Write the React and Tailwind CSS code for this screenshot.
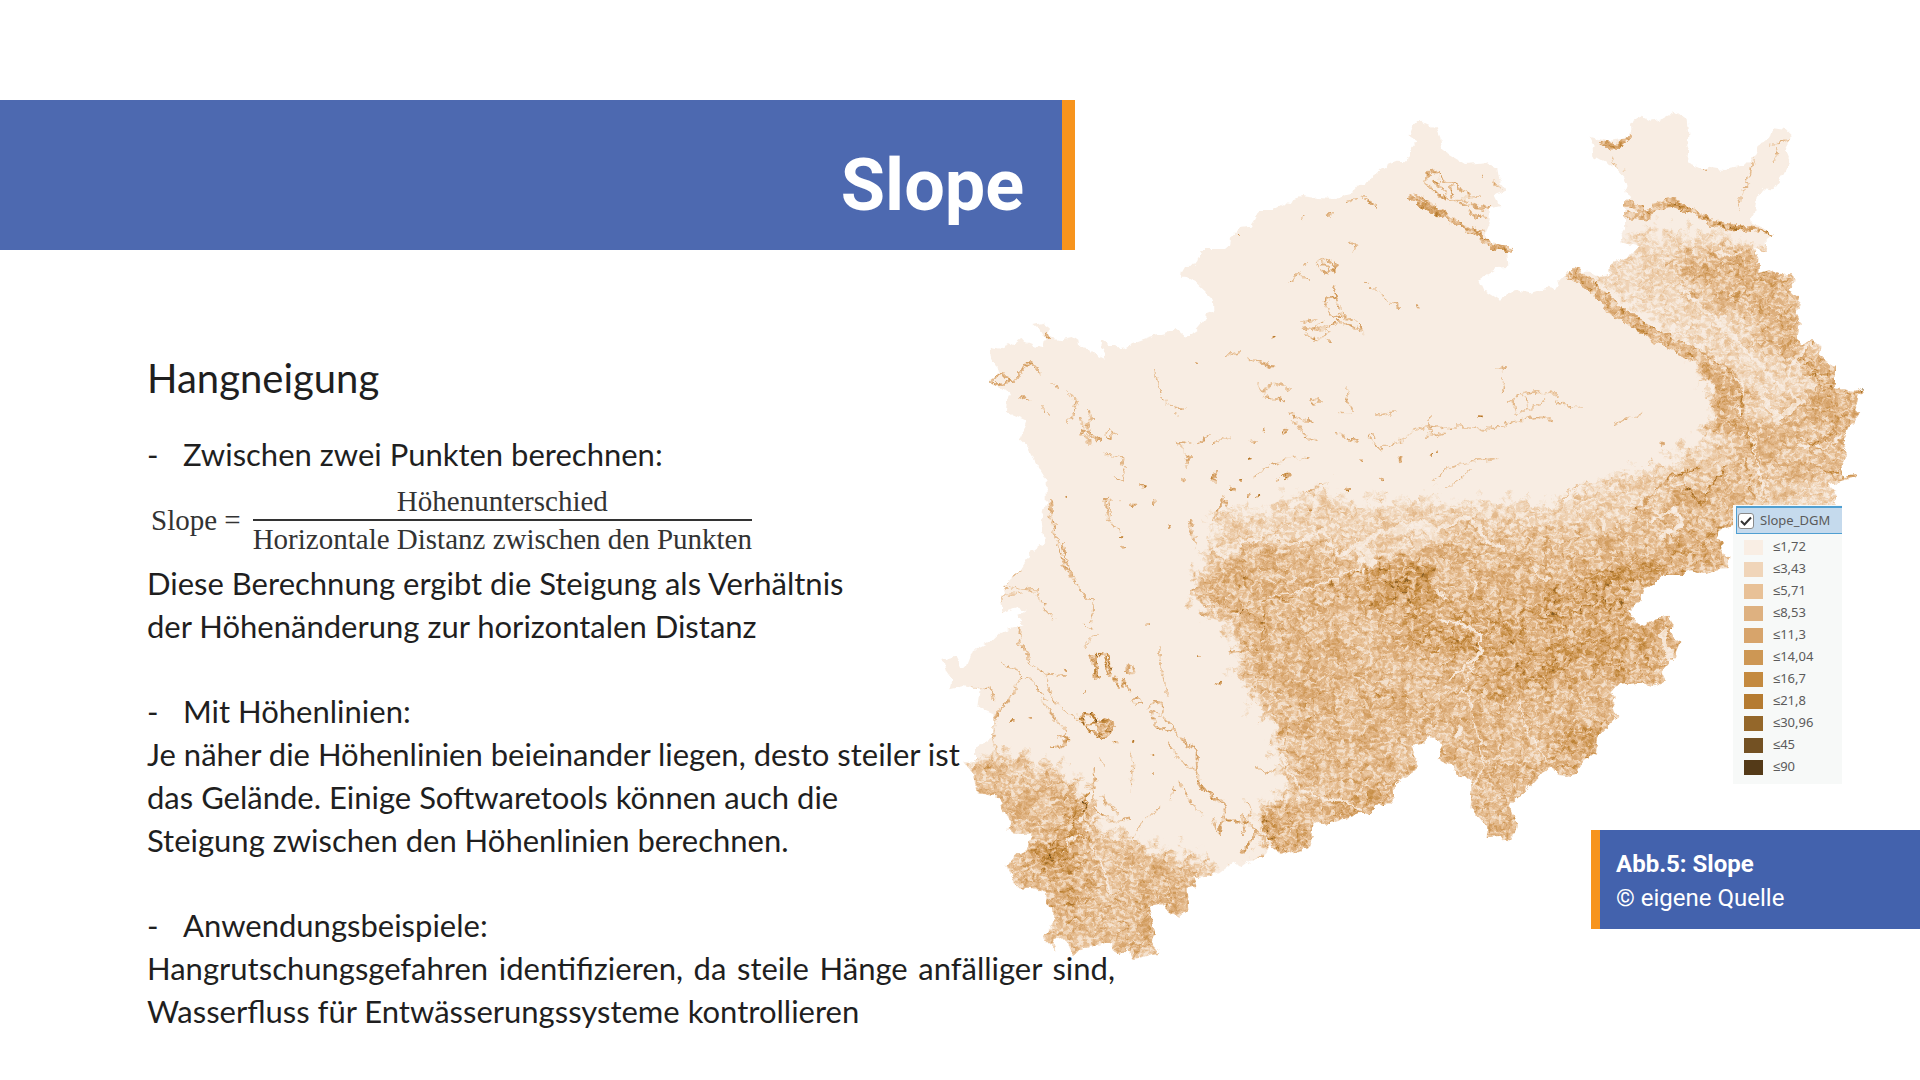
import React from "react";

const LEGEND = [
  ["≤1,72", "bg-[#f9eee4]"],
  ["≤3,43", "bg-[#f0d5b9]"],
  ["≤5,71", "bg-[#e8c197]"],
  ["≤8,53", "bg-[#deb180]"],
  ["≤11,3", "bg-[#d7a46b]"],
  ["≤14,04", "bg-[#cd9754]"],
  ["≤16,7", "bg-[#c48a3f]"],
  ["≤21,8", "bg-[#b57b31]"],
  ["≤30,96", "bg-[#94672a]"],
  ["≤45", "bg-[#735123]"],
  ["≤90", "bg-[#543a18]"],
];

const OUTLINE =
  "M178 853L178 840L205 822L200 800L182 765L180 748L188 742L210 747L235 738L250 730L271 713L285 728L310 738L342 745L347 722L328 690L310 675L340 668L360 683L352 702L370 715L395 718L425 711L442 722L445 742L482 745L492 762L520 776L525 755L513 738L518 724L535 735L556 735L568 748L595 742L605 730L660 710L705 700L735 686L765 712L800 690L825 660L828 640L853 630L852 600L830 578L800 550L772 533L753 533L755 515L765 498L790 497L805 480L815 447L885 447L900 435L905 408L927 384L962 380L975 360L990 330L1030 330L1060 313L1080 315L1095 295L1115 288L1160 294L1225 297L1250 280L1270 275L1290 252L1320 244L1335 222L1375 192L1400 182L1425 184L1440 172L1440 150L1462 124L1438 108L1450 75L1465 60" +
  "L1520 85L1530 110L1537 152L1605 192L1670 187L1702 207L1708 240L1732 272L1692 285L1708 318L1682 325L1682 360L1665 400L1680 428L1745 440L1750 452L1732 458L1735 500L1700 505L1645 538L1660 570L1710 602L1755 570L1800 580L1850 563L1875 567L1888 545L1910 520L1935 502L1955 515L1985 515L2015 530L2038 525L2038 495L2100 465L2122 442L2075 430L2072 405L2085 385L2085 300L2097 290L2080 230L2050 200L1990 168L1988 150L1995 140L1980 110L2015 120L2050 125L2075 120L2102 105L2100 70L2135 50L2165 65L2200 55L2235 35L2270 60L2275 105L2272 140L2278 155L2273 190L2315 207L2340 200L2380 207L2445 195L2480 160L2490 132L2520 120L2530 85L2570 90L2588 108L2565 150L2580 185L2560 225L2530 268L2500 265L2480 295L2472 335L2460 355L2462 370L2495 380L2532 405L2510 420L2512 455L2475 450L2488 475L2485 520L2520 510L2550 525L2585 522L2592 545L2575 570L2610 590L2600 640L2612 670L2600 715L2615 735L2640 722L2675 735L2670 770L2715 800L2715 865L2770 872L2800 865L2785 890L2775 930L2788 942L2755 985L2735 1030L2750 1055L2735 1095L2735 1130L2780 1120L2778 1132L2735 1142L2700 1155L2720 1185L2708 1240" +
  "L2410 1240L2410 1278L2365 1290L2362 1312L2378 1330L2375 1360L2398 1372L2392 1408L2360 1408L2330 1422L2290 1410L2250 1425L2200 1425L2170 1455L2145 1465L2125 1505L2098 1535L2130 1578L2160 1562L2215 1550L2228 1570L2225 1600L2248 1628L2235 1670L2195 1715L2207 1742L2160 1760L2130 1748L2060 1755L2042 1778L2060 1795L2045 1820L2065 1845L2035 1880L2005 1910L1998 1960L1955 1990L1930 2028L1885 2025L1865 2002L1840 2015L1795 2065L1740 2115L1762 2170L1750 2210L1730 2228L1710 2210L1670 2215L1672 2180L1622 2125L1625 2035L1585 2030L1565 1995L1520 1975L1540 1935L1498 1912L1475 1932L1448 1938L1462 1970L1460 2010L1395 2050L1395 2090L1380 2110L1335 2115L1320 2145L1295 2138L1200 2172L1150 2165L1148 2205L1135 2245L1060 2265L1020 2235L1000 2275L965 2280L935 2302L910 2285L865 2320L830 2330L790 2335L800 2360L770 2365L775 2430L745 2450L710 2430L700 2408L655 2420L665 2450L678 2495L665 2525L688 2558L610 2578L595 2545L570 2568L555 2560L545 2525L450 2548L430 2568L415 2530L380 2508L370 2530L378 2555L342 2515L370 2465L370 2430L345 2405L350 2380L310 2365L262 2362L240 2320L230 2295L270 2258L290 2250L305 2200L260 2202L232 2188L245 2170L225 2150L205 2090L140 2080L130 2025L100 1982L135 1990L135 1940L165 1928L190 1910L190 1840L145 1820L152 1770L100 1758L58 1768L65 1740L48 1715L40 1680L75 1670L90 1700L110 1700L130 1650L190 1620L215 1595L260 1582L285 1575L262 1548L290 1532L265 1523L215 1542L210 1485L228 1480L220 1455L265 1415L300 1360L345 1325L335 1265L350 1200L350 1140L345 1130L320 1090L300 1050L268 1020L290 962L228 935L230 905L240 885L215 865Z";

// Broad areas of relief: [path, mean slope as a grey]
const RELIEF = [
  ["M850 1235L900 1240L1010 1245L1100 1190L1200 1170L1260 1210L1500 1205L1720 1215L1860 1215L1960 1165L2100 1120L2200 1090L2260 1050L2400 980L2420 1240L2000 1420L1200 1420L860 1330Z", "#2a2a2a"],
  ["M2085 395L2200 390L2360 400L2520 440L2840 800L2840 1260L2380 1260L2330 1060L2430 960L2420 840L2330 760L2020 560L1960 510L2100 460Z", "#232323"],
  ["M2220 470L2340 440L2500 470L2640 560L2660 720L2560 700L2480 640L2350 620L2260 540Z", "#525252"],
  ["M2460 640L2620 640L2640 740L2860 860L2840 1180L2720 1160L2640 1020L2560 900L2660 900L2640 800L2480 760Z", "#545454"],
  ["M2400 960L2600 930L2740 1000L2740 1160L2520 1160L2460 1260L2380 1240Z", "#424242"],
  ["M2300 770L2400 800L2440 880L2450 1010L2340 1000L2360 900Z", "#5a5a5a"],
  ["M850 1320L880 1370L980 1310L1060 1350L1170 1310L1230 1370L1340 1400L1500 1340L1620 1270L1700 1300L1850 1290L2050 1290L2200 1190L2320 1110L2420 1240L2500 1640L2100 1900L1750 2300L1000 2320L990 2120L1110 2080L1040 1990L1050 1900L1010 1840L960 1780L930 1710L920 1650L900 1550L820 1525L800 1490L820 1400Z", "#4a4a4a"],
  ["M1170 1450L1330 1400L1500 1400L1580 1490L1800 1480L2150 1360L2400 1290L2300 1440L2100 1460L2060 1560L2200 1600L2140 1720L2000 1760L1800 1730L1700 1800L1600 1740L1500 1600L1400 1520L1300 1540Z", "#646464"],
  ["M1700 1700L1850 1660L1960 1700L1900 1770L1720 1770Z", "#767676"],
  ["M1880 1460L2090 1420L2080 1530L1920 1560Z", "#7a7a7a"],
  ["M1340 1400L1480 1400L1480 1520L1400 1520Z", "#7a7a7a"],
  ["M1360 1560L1520 1600L1640 1590L1640 1640L1480 1640Z", "#747474"],
  ["M1880 1900L2040 1860L1980 2040L1860 2000Z", "#666666"],
  ["M100 1980L190 1960L290 1980L390 2010L460 2080L490 2160L600 2230L700 2255L850 2290L870 2340L780 2480L700 2600L400 2600L200 2360L180 2200L120 2080Z", "#424242"],
  ["M400 2050L470 2090L490 2200L440 2260L470 2400L430 2500L380 2420L400 2320L260 2320L330 2240L420 2180Z", "#727272"],
  ["M560 2380L680 2280L760 2380L660 2530L560 2540Z", "#545454"],
  ["M985 2130L1120 2110L1150 2230L1060 2280Z", "#5c5c5c"],
  ["M1200 2100L1400 2020L1400 2120L1200 2170Z", "#5c5c5c"],
];

// Ridges, terraces and quarry rims: [path, grey, width]
const RIDGES = [
  ["M1442 290L1490 320L1560 360L1640 400L1690 440L1745 448", "#6c6c6c", 14],
  ["M1460 285L1540 340L1600 375L1660 395", "#5a5a5a", 8],
  ["M1480 245L1495 222L1530 222L1545 240L1590 262L1612 300L1560 300L1520 280L1480 245M1530 240L1540 280M1510 240L1530 260M1560 265L1570 290", "#5a5a5a", 7],
  ["M1600 310L1680 330M1620 340L1680 355M1610 290L1650 290M1690 240L1710 265M1650 230L1655 235", "#4a4a4a", 8],
  ["M1910 515L1945 530L2000 570L2040 620L2110 665L2180 710L2290 765L2350 810L2385 870L2400 950L2370 990", "#505050", 34],
  ["M1970 530L2040 590L2080 640L2200 700L2300 750L2390 800L2430 870L2440 960L2470 1060", "#6a6a6a", 9],
  ["M1920 520L2000 580L2050 640L2140 695L2290 768", "#6c6c6c", 7],
  ["M2085 310L2110 310L2130 330M2085 350L2150 345L2180 320L2230 305L2290 335L2340 365L2410 383", "#5c5c5c", 22],
  ["M2130 345L2180 325L2230 303L2290 330L2340 362L2410 383", "#808080", 7],
  ["M2310 350L2410 384M2420 384L2490 390L2530 405", "#808080", 11],
  ["M2010 130L2040 135L2070 138L2100 110", "#606060", 12],
  ["M2048 175L2055 200M2080 210L2090 212M2425 330L2430 290L2455 250L2465 200L2475 170M2530 185L2545 150M2515 140L2580 120", "#383838", 5],
  ["M180 845L220 815L240 850L275 820L290 790L320 800L330 825M200 850L240 850L260 830", "#505050", 8],
  ["M270 893L305 903M335 920L360 945M360 845L385 865M410 880L430 890L440 910L432 945L415 960", "#484848", 5],
  ["M482 935L485 955L468 975L475 1005L505 1022M455 960L455 1000L480 1025", "#484848", 10],
  ["M522 1000L540 985L558 1000L545 1015ZM520 1060L565 1072L583 1105L575 1140L550 1132", "#4a4a4a", 5],
  ["M675 815L690 880L710 920L760 925M740 940L745 950", "#3c3c3c", 5],
  ["M890 765L930 755M950 778L1030 800M985 850L1000 890L1060 900M1000 870L1040 850L1080 870M1080 940L1120 960L1150 970M1090 960L1130 1010L1160 1020", "#444444", 7],
  ["M742 1022L765 1040L775 1085L770 1100M745 1022L785 1030M800 1030L840 1005M850 1030L900 1010", "#444444", 5],
  ["M1160 490L1180 470L1205 490L1215 520M1165 495L1190 520L1220 500M1180 480L1200 510", "#545454", 6],
  ["M1220 555L1210 590L1180 605L1200 650L1230 640L1280 665L1298 698L1240 665L1215 660M1215 590L1235 630M1110 670L1160 655M1120 680L1170 690L1220 670M1125 700L1160 715L1200 690M1190 710L1205 725M1150 680L1180 665", "#545454", 6],
  ["M1075 552L1110 515L1135 545M1115 500L1130 492M1260 430L1282 435L1275 455M1320 560L1350 580L1380 605L1405 625M1300 545L1310 548M1295 290L1330 310L1340 320M1250 305L1275 302M1190 345L1210 350L1200 355M1300 285L1315 285", "#484848", 5],
  ["M1140 900L1155 890L1170 905L1150 912ZM1248 870L1268 930M1215 995L1285 1030M1230 940L1260 940M1310 1005L1350 1050L1420 1020M1320 1000L1340 1012", "#464646", 5],
  ["M970 1130L1060 1080L1100 1070L1140 1080M1100 1190L1160 1160L1200 1150M1340 945L1400 935M1400 1080L1420 1070L1410 1090", "#404040", 5],
  ["M1410 1020L1480 980L1530 985L1590 980L1700 985L1760 960L1830 955L1870 965M1730 910L1780 880L1860 870L1880 890M1750 900L1750 940L1800 930L1850 900M1700 800L1735 805M1720 830L1720 880M1780 880L1800 930M1880 910L1960 925M2050 970L2140 940M1500 950L1500 1010L1540 1000", "#3a3a3a", 5],
  ["M1510 1140L1560 1100L1600 1090L1700 1075M1560 1160L1620 1110M1900 1200L1930 1160L1980 1140", "#303030", 5],
  ["M360 1200L370 1300L400 1380L430 1430L450 1470L490 1510L485 1570M395 1330L410 1380M400 1400L430 1440", "#444444", 6],
  ["M530 1190L528 1220L540 1270L572 1290M538 1200L540 1240", "#464646", 6],
  ["M220 1460L240 1465L320 1470L330 1500L370 1560M212 1490L215 1540M212 1490L280 1480M220 1455L268 1410", "#3e3e3e", 5],
  ["M270 1580L265 1630L290 1660L300 1690L350 1720L400 1728M350 1720L350 1760L390 1820L440 1860M210 1685L280 1720L250 1780L200 1840L190 1900L200 1960L240 2010L260 2050M290 1730L340 1780L350 1800M330 1795L410 1900M100 1765L180 1765L195 1800", "#424242", 5],
  ["M460 1640L490 1610L510 1605M480 1590L460 1575M600 2220L640 2170M650 2160L690 2120", "#3c3c3c", 5],
  ["M482 1665L500 1662L500 1725M490 1670L495 1730L510 1735M510 1665L535 1665L538 1720M520 1670L530 1720M585 1715L600 1698L612 1705L600 1716ZM550 1730L565 1760M575 1740L600 1770", "#7c7c7c", 8],
  ["M450 1850L465 1838L490 1840L498 1865L475 1880L450 1860M475 1880L500 1915L540 1905L558 1875L520 1858L500 1880L510 1910", "#8a8a8a", 8],
  ["M515 1868L545 1875L530 1895L510 1895Z", "#707070", 22],
  ["M390 1915L405 1905L415 1918L400 1935L365 1940", "#686868", 8],
  ["M605 1805L625 1790L635 1810L615 1820ZM655 1820L680 1805L700 1830L690 1850L660 1830L680 1880L730 1890M700 1850L730 1880L740 1910L800 1950L800 2010L780 2000L740 1970L720 1930", "#505050", 6],
  ["M800 2010L810 2060L850 2090L880 2110L885 2160L930 2160L980 2190L1010 2230M940 2150L940 2200M980 2190L930 2260M880 2150L870 2200", "#5c5c5c", 9],
  ["M690 1640L690 1690L700 1740L715 1770L712 1790M745 2050L790 2110L815 2150M730 2060L725 2090M605 1960L605 2080M490 2000L495 2080L480 2110M510 1970L525 1995M850 2160L860 2200M955 2110L965 2150M975 1995L1010 2020L1035 2010", "#3e3e3e", 5],
  ["M480 2110L530 2160L600 2160M520 2090L560 2140", "#444444", 7],
  ["M360 2190L460 2140L470 2090M400 2220L440 2190L470 2200M270 2300L340 2280L400 2250", "#8a8a8a", 9],
  ["M1000 2150L1010 2200L1050 2240", "#808080", 16],
  ["M800 1330L780 1290M780 1270L790 1300L800 1330M850 1260L870 1220L880 1200L900 1230M785 1480L800 1465L820 1510L870 1535", "#464646", 7],
  ["M900 1535L960 1540L1010 1510L1170 1470L1290 1410M1010 1500L990 1640L900 1660M1500 1400L1310 1410L1320 1530", "#747474", 8],
  ["M1450 1490L1580 1530L1700 1570M1640 1630L1500 1600M1720 1640L1820 1560L1950 1510M2090 1450L2300 1350L2400 1260M2120 1230L2220 1130L2300 1110M2260 1150L2310 1210L2390 1100", "#7c7c7c", 8],
  ["M1040 1900L1090 1870L1200 1840L1350 1790L1480 1790M1060 1940L1100 1850M1120 1820L1170 1780", "#686868", 7],
  ["M2620 775L2650 810L2690 820M2610 800L2700 860M2760 880L2795 868M2750 930L2700 1000M2680 1120L2780 1125M2640 1040L2740 990", "#848484", 10],
  ["M2450 1080L2460 1160L2480 1240", "#848484", 8],
];

// Flat valley floors and reservoirs cut through the relief
const VALLEYS = [
  ["M840 1300L855 1350L885 1370L940 1325L990 1320L1000 1290L1040 1310L1060 1330L1110 1325L1180 1290L1200 1330L1225 1370L1290 1335L1330 1380", 9],
  ["M1225 1370L1260 1345L1300 1330L1340 1300L1440 1280L1520 1290L1620 1250L1660 1310L1720 1350", 12],
  ["M1280 1335L1310 1345L1330 1390L1290 1380Z", 18],
  ["M1400 1290L1480 1270L1510 1310", 26],
  ["M1010 1500L1150 1460L1280 1405L1310 1410L1320 1530", 5],
  ["M1530 1560L1620 1580L1650 1610L1650 1660", 6],
  ["M1560 1740L1620 1690L1660 1650", 6],
  ["M1640 1440L1630 1480M1810 1410L1830 1440L1860 1430M1520 1480L1550 1500", 8],
  ["M1650 1650L1600 1760L1640 1880L1660 2000L1630 2060", 4],
  ["M1770 1800L1790 1900L1860 1990", 4],
  ["M1050 1960L1110 2070L1180 2100L1240 2100L1290 2130", 6],
  ["M940 2100L1000 2180L1020 2250", 14],
  ["M460 2120L450 2160L480 2190L410 2220L400 2260M480 2230L520 2300L540 2380", 5],
  ["M2410 380L2425 390", 8],
  ["M2370 440L2385 470L2430 460", 7],
  ["M2330 770L2360 775L2440 860L2430 930L2470 1040L2500 1170", 8],
  ["M2250 560L2400 700L2520 830L2600 900", 10],
  ["M2480 850L2540 960L2620 900", 16],
  ["M2640 730L2600 770L2560 860M2600 1040L2700 1040L2740 1010", 8],
  ["M2160 1260L2240 1230L2260 1270L2200 1310", 12],
  ["M2200 1600L2220 1680", 16],
  ["M1590 1880L1580 1910", 14],
];

const SPOTS = [
  [610, 1215, 6], [672, 1209, 6], [636, 1160, 6], [575, 1200, 4], [578, 1310, 5], [578, 1342, 4], [650, 1575, 4],
  [757, 1141, 7], [850, 1132, 9], [858, 1122, 7], [911, 1168, 8], [935, 1143, 6], [957, 1076, 7], [965, 1020, 6], [1003, 988, 4],
  [1062, 992, 9], [1040, 1139, 6], [1066, 1128, 10], [954, 1188, 5], [983, 1193, 5], [775, 1075, 8], [1035, 709, 5], [1290, 1077, 5],
  [1412, 1078, 8], [1352, 1140, 7], [1255, 1168, 5], [1460, 618, 5], [1652, 946, 6], [800, 787, 4], [1123, 353, 5], [1200, 348, 7],
  [352, 711, 8], [930, 1460, 8], [945, 1426, 10], [948, 1520, 6], [958, 1507, 5], [804, 1672, 4], [870, 1748, 6], [672, 2023, 4],
  [302, 1850, 6], [245, 1864, 5], [412, 1838, 4], [404, 1710, 4], [410, 1188, 4], [1142, 1234, 5], [1504, 1063, 5], [1522, 1048, 4],
  [1918, 1678, 9], [690, 1885, 6], [562, 1928, 5], [608, 1925, 5], [175, 2007, 9], [555, 1735, 6], [670, 1962, 5], [2198, 1030, 4],
  [717, 1282, 4], [780, 1265, 4], [532, 1192, 4], [728, 2072, 4], [465, 1775, 3], [2325, 208, 3], [2232, 246, 3], [918, 408, 3],
];

// Slope classes as channel tables for the colour ramp
const RAMP_R = ".976 .941 .910 .871 .843 .804 .769 .710 .580 .451 .329";
const RAMP_G = ".933 .835 .757 .694 .643 .592 .541 .482 .404 .318 .227";
const RAMP_B = ".894 .725 .592 .502 .420 .329 .247 .192 .165 .137 .094";

function SlopeMap() {
  return (
    <svg viewBox="0 0 2970 2640" className="block h-auto w-full" role="img" aria-label="Hangneigungskarte">
      <defs>
        <clipPath id="land">
          <path d={OUTLINE} />
        </clipPath>
        <filter id="soft" filterUnits="userSpaceOnUse" x="0" y="0" width="2970" height="2640" colorInterpolationFilters="sRGB">
          <feGaussianBlur stdDeviation="16" result="areas" />
          <feTurbulence type="fractalNoise" baseFrequency="0.03" numOctaves="4" seed="5" />
          <feDisplacementMap in="areas" scale="130" xChannelSelector="R" yChannelSelector="G" />
        </filter>
        <filter id="ramp" filterUnits="userSpaceOnUse" x="0" y="0" width="2970" height="2640" colorInterpolationFilters="sRGB">
          <feTurbulence type="fractalNoise" baseFrequency="0.03" numOctaves="3" seed="4" result="warp" />
          <feDisplacementMap in="SourceGraphic" in2="warp" scale="22" xChannelSelector="R" yChannelSelector="G" result="height" />
          <feTurbulence type="turbulence" baseFrequency="0.014 0.022" numOctaves="4" seed="11" />
          <feColorMatrix type="matrix" values="0 0 0 -4 1.35  0 0 0 -4 1.35  0 0 0 -4 1.35  0 0 0 0 1" result="straight" />
          <feDisplacementMap in="straight" in2="warp" scale="70" xChannelSelector="G" yChannelSelector="R" result="veins" />
          <feTurbulence type="fractalNoise" baseFrequency="0.07 0.1" numOctaves="3" seed="23" />
          <feColorMatrix type="matrix" values="0 0 0 3.2 -1.1  0 0 0 3.2 -1.1  0 0 0 3.2 -1.1  0 0 0 0 1" result="grain" />
          <feComposite in="veins" in2="grain" operator="arithmetic" k1="0" k2="0.5" k3="0.45" k4="0.06" result="noise" />
          <feComposite in="height" in2="noise" operator="arithmetic" k1="1.6" k2="0.2" k3="0" k4="-0.03" />
          <feComponentTransfer>
            <feFuncR type="table" tableValues={RAMP_R} />
            <feFuncG type="table" tableValues={RAMP_G} />
            <feFuncB type="table" tableValues={RAMP_B} />
            <feFuncA type="linear" slope="0" intercept="1" />
          </feComponentTransfer>
        </filter>
        <filter id="coast" filterUnits="userSpaceOnUse" x="0" y="0" width="2970" height="2640" colorInterpolationFilters="sRGB">
          <feTurbulence type="fractalNoise" baseFrequency="0.045" numOctaves="2" seed="8" />
          <feDisplacementMap in="SourceGraphic" scale="22" xChannelSelector="R" yChannelSelector="G" />
        </filter>
      </defs>
      <g filter="url(#coast)">
        <g clipPath="url(#land)">
          <g filter="url(#ramp)" strokeLinecap="round" strokeLinejoin="round">
            <rect width="2970" height="2640" fill="#000" />
            <g filter="url(#soft)">
              {RELIEF.map(([d, fill]) => (
                <path key={d} d={d} fill={fill} />
              ))}
            </g>
            {VALLEYS.map(([d, width]) => (
              <path key={d} d={d} fill="none" stroke="#101010" strokeWidth={width} />
            ))}
            {RIDGES.map(([d, stroke, width]) => (
              <path key={d} d={d} fill="none" stroke={stroke} strokeWidth={width} />
            ))}
            {SPOTS.map(([cx, cy, r]) => (
              <circle key={`${cx}-${cy}`} cx={cx} cy={cy} r={r} fill="#787878" />
            ))}
          </g>
        </g>
      </g>
    </svg>
  );
}

function Legend() {
  return (
    <div className="z-10 mt-[405px] mr-[78px] w-[109px] self-start justify-self-end bg-[#f7f9f8] pt-px pb-[6px] pl-[3px] font-['Noto_Sans',sans-serif] text-[13px] text-[#5b5b5b] [grid-area:1/1]">
      <label className="mb-[2px] flex h-7 items-center gap-[6px] border border-t-2 border-r-0 border-[#4f9fd2] bg-[#c5daed] pl-px">
        <span className="grid size-4 place-items-center">
          <input type="checkbox" defaultChecked className="size-4 appearance-none rounded-[3px] border border-[#8a8a8a] bg-white [grid-area:1/1]" />
          <svg viewBox="0 0 16 16" className="pointer-events-none size-4 [grid-area:1/1]" fill="none" stroke="#333" strokeWidth="2">
            <path d="M3 8L6.5 11.5L13 4.5" />
          </svg>
        </span>
        Slope_DGM
      </label>
      <ul>
        {LEGEND.map(([label, swatch]) => (
          <li key={label} className="flex h-[22px] items-center gap-[10px] pl-2">
            <span className={`h-[15px] w-[19px] ${swatch}`} />
            {label}
          </li>
        ))}
      </ul>
    </div>
  );
}

function Item({ children }) {
  return (
    <h3 className="flex">
      <span className="w-9">-</span>
      {children}
    </h3>
  );
}

export default function App() {
  return (
    <main className="grid min-h-screen grid-cols-1 overflow-hidden bg-white text-[#1f1f1f]">
      <div className="z-10 pt-[100px] [grid-area:1/1]">
        <header className="flex h-[150px] w-[56%] items-center justify-end border-r-[13px] border-[#f7941d] bg-[#4d69b0] pt-[22px] pr-[38px]">
          <h1 className="font-['Roboto',sans-serif] text-[72px] leading-none font-bold text-white">Slope</h1>
        </header>
        <div className="ml-[147px] w-[968px] pt-[104px] font-['Lato',sans-serif] text-[31px] leading-[43px]">
          <h2 className="mb-[31px] text-[40px] leading-[48px]">Hangneigung</h2>
          <Item>Zwischen zwei Punkten berechnen:</Item>
          <div className="mt-[7px] mb-[5px] ml-1 flex items-center gap-3 font-['Liberation_Serif',serif] text-[29px] leading-9 text-[#333]">
            <span>Slope =</span>
            <span className="flex flex-col text-center">
              <span className="border-b-2 border-[#333]">Höhenunterschied</span>
              <span>Horizontale Distanz zwischen den Punkten</span>
            </span>
          </div>
          <p>
            Diese Berechnung ergibt die Steigung als Verhältnis
            <br />
            der Höhenänderung zur horizontalen Distanz
          </p>
          <section className="mt-[42px]">
            <Item>Mit Höhenlinien:</Item>
            <p>
              Je näher die Höhenlinien beieinander liegen, desto steiler ist
              <br />
              das Gelände. Einige Softwaretools können auch die
              <br />
              Steigung zwischen den Höhenlinien berechnen.
            </p>
          </section>
          <section className="mt-[42px]">
            <Item>Anwendungsbeispiele:</Item>
            <p className="text-justify">
              Hangrutschungsgefahren identifizieren, da steile Hänge anfälliger sind, Wasserfluss für
              Entwässerungssysteme kontrollieren
            </p>
          </section>
        </div>
      </div>
      <figure className="mt-[100px] grid w-[990px] grid-cols-1 self-start justify-self-end [grid-area:1/1]">
        <div className="[grid-area:1/1]">
          <SlopeMap />
        </div>
        <Legend />
        <figcaption className="z-10 mb-[51px] w-[329px] self-end justify-self-end border-l-[9px] border-[#f7941d] bg-[#4362ad] pt-[17px] pb-[14px] pl-4 font-['Roboto',sans-serif] text-2xl leading-[34px] text-white [grid-area:1/1]">
          <strong className="block font-bold">Abb.5: Slope</strong>© eigene Quelle
        </figcaption>
      </figure>
    </main>
  );
}
